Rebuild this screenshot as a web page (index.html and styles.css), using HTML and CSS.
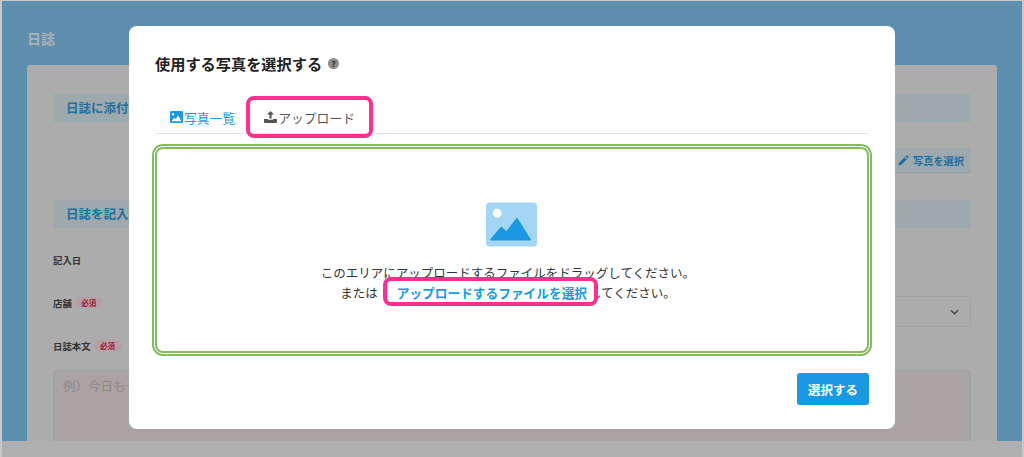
FILE: index.html
```html
<!DOCTYPE html>
<html lang="ja">
<head>
  <meta charset="UTF-8" />
  <meta name="viewport" content="width=device-width, initial-scale=1.0"/>
  <title>日誌</title>
  <link rel="stylesheet" href="styles.css">
</head>
<body>

  <!-- 背景の日誌ページ -->
  <div class="page">
    <h1 class="page-title">日誌</h1>
    <div class="card">
      <div class="section-head">日誌に添付する写真</div>
      <div class="photo-row">
        <button class="btn-photo">
          <svg class="icon-pencil" viewBox="0 0 12 12"><path d="M0.5 11.5 L1 8.6 L7.2 2.4 L9.6 4.8 L3.4 11 Z M8 1.6 L9 0.6 Q9.5 0.2 10 0.6 L11.4 2 Q11.8 2.5 11.4 3 L10.4 4 Z"/></svg>
          写真を選択
        </button>
      </div>
      <div class="section-head">日誌を記入する</div>
      <div class="field field-date"><span class="field-label">記入日</span></div>
      <div class="field field-shop">
        <span class="field-label">店舗</span><span class="required">必須</span>
        <div class="select-box">
          <svg class="icon-chevron" viewBox="0 0 10 6"><path d="M1 1 L5 5 L9 1"/></svg>
        </div>
      </div>
      <div class="field field-body"><span class="field-label">日誌本文</span><span class="required">必須</span></div>
      <div class="textarea-box">例）今日も一日</div>
    </div>
  </div>

  <!-- モーダル -->
  <div class="modal">
    <div class="modal-title">
      <h2>使用する写真を選択する</h2>
      <span class="help">?</span>
    </div>

    <div class="tabs">
      <div class="tab tab-list">
        <svg class="tab-icon" viewBox="0 0 13 12"><path fill="#1a98e2" fill-rule="evenodd" d="M1.2 0 H11.8 Q13 0 13 1.2 V10.8 Q13 12 11.8 12 H1.2 Q0 12 0 10.8 V1.2 Q0 0 1.2 0 Z M3 2 A1.2 1.2 0 1 0 3 4.4 A1.2 1.2 0 1 0 3 2 Z M1.6 10.2 H11.4 L8.3 4.6 L5.6 8 L4.2 6.7 Z"/></svg>
        写真一覧
      </div>
      <div class="tab tab-upload mark">
        <svg class="tab-icon" viewBox="0 0 13 12"><path fill="#555" d="M6.5 0 L10 3.6 H7.6 V7.6 H5.4 V3.6 H3 Z M0 8 H4 V8.8 H9 V8 H13 V11 Q13 12 12 12 H1 Q0 12 0 11 Z"/></svg>
        アップロード
      </div>
    </div>

    <div class="dropzone">
      <svg class="drop-icon" viewBox="0 0 52 45">
        <rect width="52" height="45" rx="4" fill="#a3d5f5"/>
        <circle cx="11.5" cy="11" r="4.5" fill="#fff"/>
        <path fill="#1a98e2" d="M5 38 L15.5 25.5 L21 30.500 L31.500 16.500 L45 38 Z" stroke="#1a98e2" stroke-width="1.500" stroke-linejoin="round"/>
      </svg>
      <p class="drop-text">このエリアにアップロードするファイルをドラッグしてください。</p>
      <p class="drop-text">または<span class="drop-link mark"><span class="drop-link-text">アップロードするファイルを選択</span></span>してください。</p>
    </div>

    <div class="modal-foot">
      <button class="btn-select">選択する</button>
    </div>
  </div>

</body>
</html>
```

FILE: styles.css
```css
* { box-sizing: border-box; }
html, body { height: 100%; }
body {
  margin: 0;
  background: #afafaf;
  font-family: "Noto Sans CJK JP", "Noto Sans", sans-serif;
  overflow: hidden;
  border: 2px solid #c9c9c9;
  border-top-width: 1px;
  border-bottom: 0;
  position: relative;
  height: 457px;
}
.page {
  height: 440px;
  background: #5f8fae;
  padding: 0 25px 0 25px;
  overflow: hidden;
}
.page-title {
  margin: 0;
  padding-top: 27px;
  height: 64px;
  font-size: 14px;
  line-height: 20px;
  font-weight: 700;
  color: #abb2b5;
}
.card {
  height: 376px;
  background: #acacac;
  border-radius: 3px 3px 0 0;
  padding: 29px 26px 0;
  overflow: hidden;
}
.section-head {
  height: 28px;
  line-height: 28px;
  padding-left: 13px;
  background: #9da9ad;
  border-radius: 3px;
  font-size: 12.500px;
  font-weight: 700;
  color: #1f6f9f;
}
.photo-row {
  height: 78px;
  padding-top: 26px;
  display: flex;
  justify-content: flex-end;
}
.btn-photo {
  height: 25px;
  width: 80px;
  border: 0;
  border-bottom: 1px solid #8a9ba3;
  border-radius: 3px;
  background: #9da9ad;
  color: #1f6f9f;
  font: 700 10.200px "Noto Sans CJK JP", sans-serif;
  display: flex;
  align-items: center;
  gap: 4px;
  justify-content: flex-end;
  padding: 0 7px 0 0;
}
.icon-pencil { width: 11px; height: 11px; fill: #1f6f9f; }
.field {
  position: relative;
  display: flex;
  align-items: flex-start;
  line-height: 14px;
}
.field-label {
  font-size: 9.400px;
  font-weight: 700;
  color: #333;
  line-height: 14px;
}
.field-date { margin-top: 25px; height: 43px; }
.field-shop { height: 43px; }
.field-body { height: 31px; }
.required {
  margin: 1px 0 0 3px;
  padding: 0 6.500px;
  height: 11px;
  line-height: 11px;
  border-radius: 6px;
  background: #b79ea4;
  color: #9a2035;
  font-size: 7.500px;
  font-weight: 700;
}
.select-box {
  position: absolute;
  right: 0;
  top: 0;
  width: 300px;
  height: 31px;
  border: 1px solid #a2a2a2;
  border-radius: 3px;
  display: flex;
  align-items: center;
  justify-content: flex-end;
  padding-right: 11px;
}
.icon-chevron { width: 9px; height: 6px; fill: none; stroke: #444; stroke-width: 1.500; }
.textarea-box {
  height: 100px;
  padding: 5px 9px;
  line-height: 20px;
  background: #aaa3a3;
  border: 1px solid #a5a0a0;
  border-radius: 3px;
  color: #8a8a8a;
  font-size: 12.500px;
}

/* モーダル */
.modal {
  position: absolute;
  left: 127px;
  top: 25px;
  width: 766px;
  height: 403px;
  background: #fff;
  border-radius: 8px;
  padding: 26px;
}
.modal-title {
  display: flex;
  align-items: center;
  gap: 6px;
  height: 22px;
}
.modal-title h2 {
  margin: 0;
  font-size: 15.200px;
  font-weight: 700;
  color: #222;
}
.help {
  width: 11px;
  height: 11px;
  border-radius: 50%;
  background: #8c8c8c;
  color: #222;
  font-size: 8px;
  font-weight: 700;
  line-height: 11px;
  text-align: center;
}
.tabs {
  margin-top: 24px;
  height: 36px;
  padding-top: 3px;
  border-bottom: 1px solid #e3e3e3;
  display: flex;
  align-items: center;
  gap: 29px;
  padding-left: 15px;
}
.tab {
  display: flex;
  align-items: center;
  gap: 1px;
  font-size: 12.800px;
  position: relative;
  white-space: nowrap;
}
.tab-list { color: #1a98e2; }
.tab-upload { color: #555; }
.tab-icon { width: 13px; height: 12px; }
.mark::after {
  content: "";
  position: absolute;
  border: 4px solid #ff2f92;
  border-radius: 8px;
  pointer-events: none;
}
.tab-upload::after { left: -18px; right: -18px; top: -12px; bottom: -11px; }
.dropzone {
  margin: 10px -3px 0;
  height: 212px;
  border: 5px double #85bb65;
  border-radius: 11px;
  display: flex;
  flex-direction: column;
  align-items: center;
  padding: 53px 8px 0 0;
}
.drop-icon { width: 51px; height: 45px; margin: 0 0 16px 6px; flex: none; }
.drop-text {
  margin: 0;
  font-size: 12.500px;
  line-height: 20px;
  color: #333;
  white-space: nowrap;
}
.drop-link {
  position: relative;
  margin: 0 2px 0 19px;
  color: #1a98e2;
  font-weight: 700;
  font-size: 12.700px;
}
.drop-link-text { position: relative; z-index: 2; }
.drop-link::after {
  left: -14px;
  right: -11px;
  top: -6px;
  bottom: -4px;
  background: #fff;
  z-index: 1;
}
.modal-foot {
  margin-top: 17px;
  display: flex;
  justify-content: flex-end;
}
.btn-select {
  width: 72px;
  height: 32px;
  border: 0;
  border-radius: 3px;
  background: #1a98e2;
  color: #fff;
  font: 700 12.500px "Noto Sans CJK JP", sans-serif;
}
```
